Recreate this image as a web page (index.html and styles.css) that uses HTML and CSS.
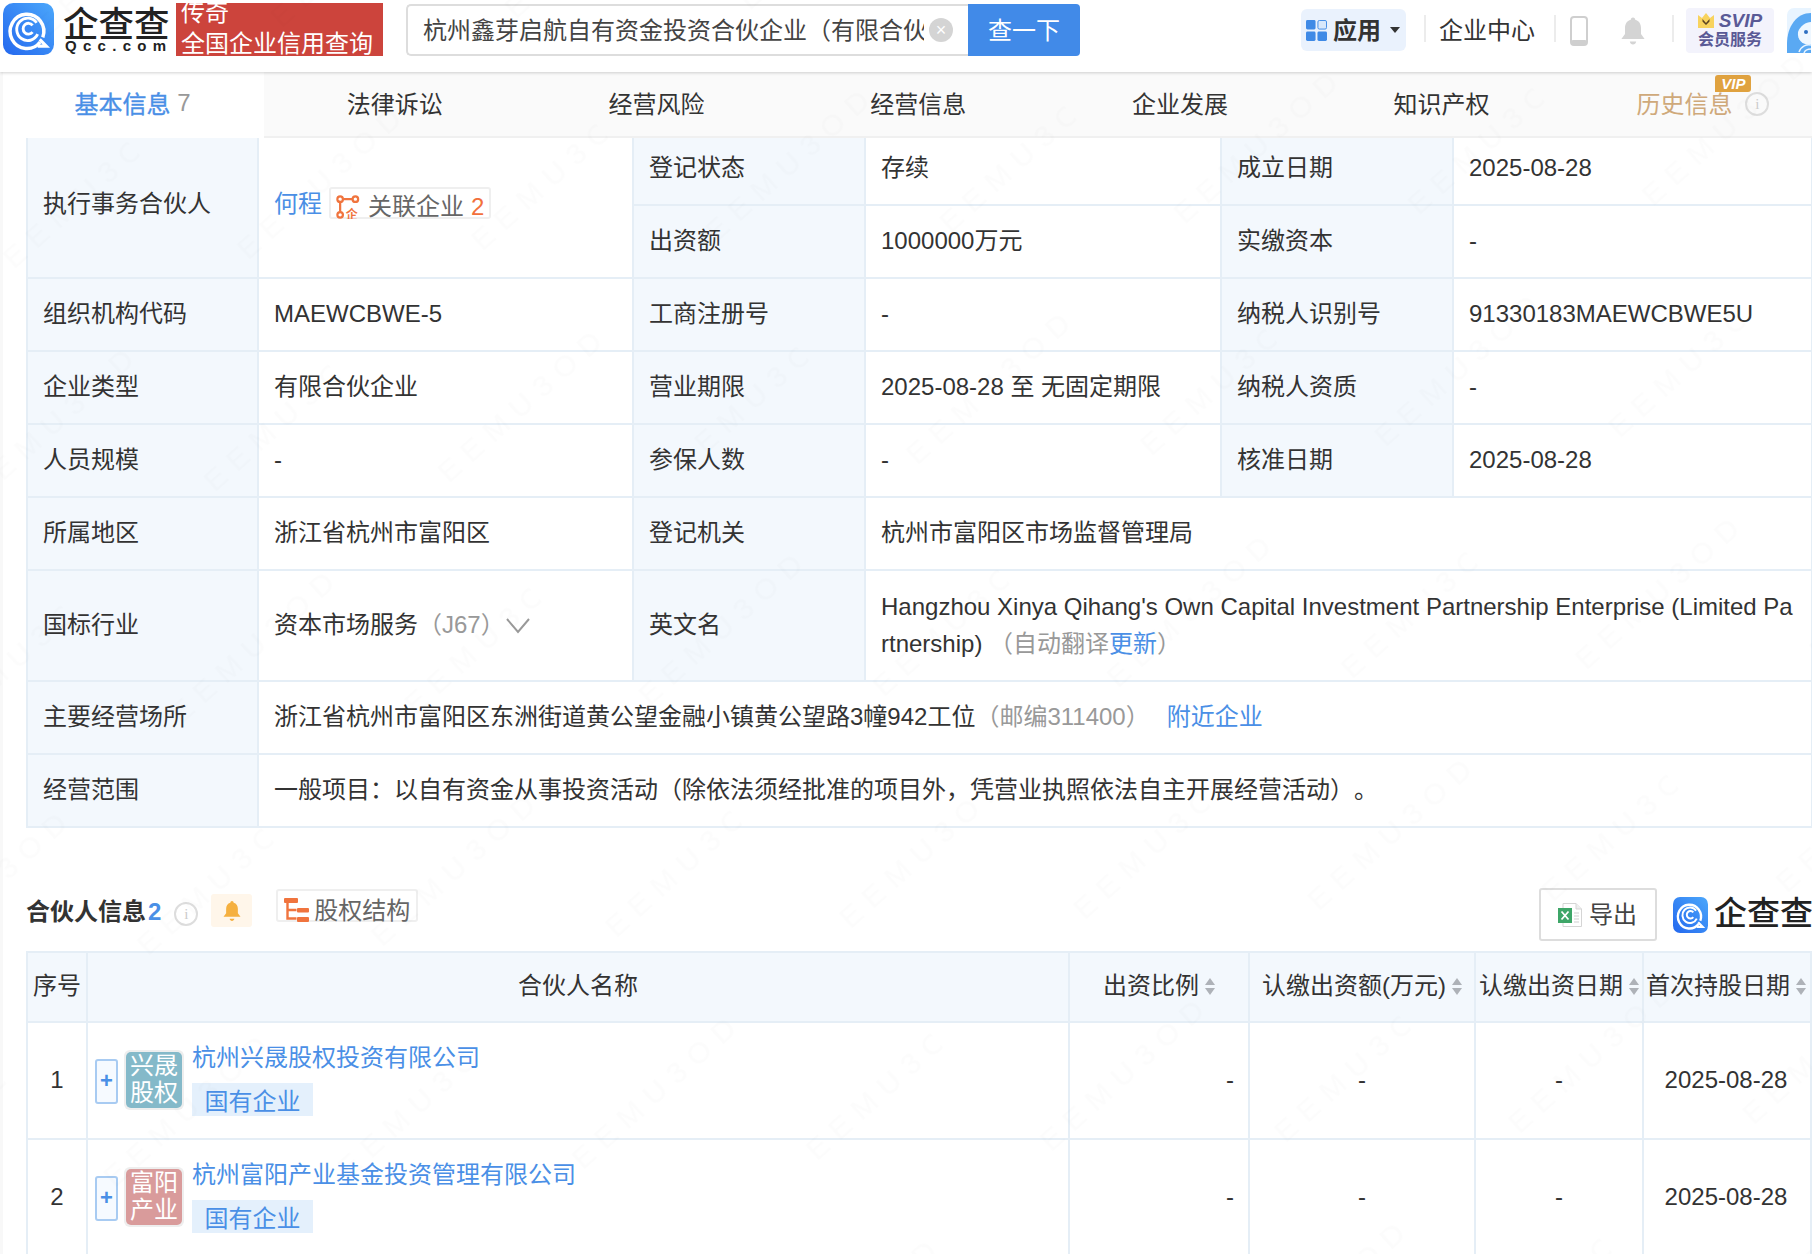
FILE: index.html
```html
<!DOCTYPE html>
<html lang="zh-CN">
<head>
<meta charset="utf-8">
<title>企查查</title>
<link rel="stylesheet" href="styles.css">
</head>
<body>
<div class="page">
  <header class="topbar">
    <svg class="logo-mark" viewBox="0 0 50 50" preserveAspectRatio="none" aria-hidden="true">
      <defs><linearGradient id="lg" x1="0" y1="1" x2="1" y2="0"><stop offset="0" stop-color="#2468ee"/><stop offset="1" stop-color="#4ba7fb"/></linearGradient></defs>
      <rect width="50" height="50" rx="10" fill="url(#lg)"/>
      <path d="M36.5 37.5A16.5 16.5 0 1 1 39 33" fill="none" stroke="#fff" stroke-width="3.4"/>
      <path d="M34 41.5h8.5L36 35" fill="none" stroke="#fff" stroke-width="3"/>
      <path d="M33 19A10.8 10.8 0 1 0 34 30" fill="none" stroke="#fff" stroke-width="2.8"/>
      <path d="M29 21.5A5.2 5.2 0 1 0 29 28" fill="none" stroke="#fff" stroke-width="2.8"/>
    </svg>
    <div class="wordmark">
      <div class="wordmark-cn">企查查</div>
      <div class="wordmark-en">Qcc.com</div>
    </div>
    <div class="promo">
      <div class="promo-top">传奇</div>
      <div class="promo-main">全国企业信用查询</div>
    </div>
    <div class="search">
      <div class="search-box">
        <span class="search-text">杭州鑫芽启航自有资金投资合伙企业（有限合伙企业）</span>
        <span class="search-clear">×</span>
      </div>
      <div class="search-btn"><span class="search-btn-text">查一下</span></div>
    </div>
    <div class="apps">
      <svg class="apps-icon" viewBox="0 0 22 22" aria-hidden="true">
        <rect width="10" height="10" rx="1.5" fill="#3f8ae6"/>
        <rect x="12.5" y=".5" width="9" height="9" rx="1.5" fill="#d8e8fb" stroke="#3f8ae6"/>
        <rect y="12" width="10" height="10" rx="1.5" fill="#3f8ae6"/>
        <rect x="12" y="12" width="10" height="10" rx="1.5" fill="#3f8ae6"/>
      </svg>
      <span class="apps-text">应用</span>
      <span class="apps-caret"></span>
    </div>
    <span class="vsep vsep-a"></span>
    <span class="ent-center">企业中心</span>
    <span class="vsep vsep-b"></span>
    <svg class="phone" viewBox="0 0 18 30" aria-hidden="true">
      <rect x="1" y="1" width="16" height="28" rx="3" fill="#fff" stroke="#cfcfcf" stroke-width="2"/>
      <rect x="1" y="24" width="16" height="5" rx="2" fill="#cfcfcf"/>
    </svg>
    <svg class="bell" viewBox="0 0 24 30" aria-hidden="true">
      <path d="M12 1.500c1.400 0 2.200 1 2.200 2.200 4 1 5.800 4.400 5.800 8.300v6l3.600 5H.4L4 18v-6c0-3.900 1.800-7.300 5.800-8.300C9.800 2.500 10.600 1.500 12 1.500zM8.800 25.500h6.400c-.3 1.800-1.600 3-3.200 3s-2.900-1.200-3.200-3z" fill="#d4d4d4"/>
    </svg>
    <span class="vsep vsep-c"></span>
    <div class="svip">
      <div class="svip-top">
        <svg class="crown" viewBox="0 0 16 15" aria-hidden="true">
          <path d="M0 2l4 3 4-5 4 5 4-3v13H0z" fill="#f8d35e"/>
          <path d="M4.500 6l3.500 4 3.500-4v2.500L8 12 4.500 8.500z" fill="#5b4320"/>
        </svg>
        <span class="svip-label">SVIP</span>
      </div>
      <div class="svip-sub">会员服务</div>
    </div>
    <svg class="avatar" viewBox="0 0 24 45" aria-hidden="true">
      <rect width="40" height="45" rx="7" fill="#e8f4ff"/>
      <path d="M0 36C0 18 10 5 24 5v40H0z" fill="#5aa9f3"/>
      <path d="M11 24c2-6 8-10 13-10v22c-7 2-14-3-13-12z" fill="#eef7ff"/>
      <circle cx="19" cy="24" r="2" fill="#2d6fc2"/>
      <path d="M12 44c2-6 8-8 12-7M17 45c1-3 4-4 7-4" fill="none" stroke="#e8f4ff" stroke-width="1.500"/>
    </svg>
  </header>

  <div class="content">
    <nav class="tabs">
      <div class="tab tab-active">基本信息 <span class="tab-count">7</span></div>
      <div class="tab">法律诉讼</div>
      <div class="tab">经营风险</div>
      <div class="tab">经营信息</div>
      <div class="tab">企业发展</div>
      <div class="tab">知识产权</div>
      <div class="tab tab-history">
        <span class="history-label">历史信息<span class="vip-badge">VIP</span></span>
        <span class="info-dot info-dot-tab">i</span>
      </div>
    </nav>

    <main class="main">
      <table class="info">
        <colgroup><col class="i1"><col class="i2"><col class="i3"><col class="i4"><col class="i5"><col class="i6"></colgroup>
        <tbody>
          <tr>
            <th rowspan="2">执行事务合伙人</th>
            <td rowspan="2">
              <div class="person">
                <a class="link person-name">何程</a>
                <span class="related">
                  <svg class="related-icon" viewBox="0 0 26 26" aria-hidden="true">
                    <circle cx="4.500" cy="4.500" r="3" fill="none" stroke="#f0743e" stroke-width="2.400"/>
                    <circle cx="21" cy="4.500" r="3" fill="none" stroke="#f0743e" stroke-width="2.400"/>
                    <circle cx="4.500" cy="21.500" r="3" fill="none" stroke="#f0743e" stroke-width="2.400"/>
                    <path d="M8 4.500h9.500M4.500 8v10" stroke="#f0743e" stroke-width="2.400"/>
                    <text x="17" y="25.500" class="related-ent">企</text>
                  </svg>
                  <span class="related-text">关联企业</span>
                  <span class="related-num">2</span>
                </span>
              </div>
            </td>
            <th>登记状态</th><td>存续</td>
            <th>成立日期</th><td>2025-08-28</td>
          </tr>
          <tr>
            <th>出资额</th><td>1000000万元</td>
            <th>实缴资本</th><td>-</td>
          </tr>
          <tr>
            <th>组织机构代码</th><td>MAEWCBWE-5</td>
            <th>工商注册号</th><td>-</td>
            <th>纳税人识别号</th><td>91330183MAEWCBWE5U</td>
          </tr>
          <tr>
            <th>企业类型</th><td>有限合伙企业</td>
            <th>营业期限</th><td>2025-08-28 至 无固定期限</td>
            <th>纳税人资质</th><td>-</td>
          </tr>
          <tr>
            <th>人员规模</th><td>-</td>
            <th>参保人数</th><td>-</td>
            <th>核准日期</th><td>2025-08-28</td>
          </tr>
          <tr>
            <th>所属地区</th><td>浙江省杭州市富阳区</td>
            <th>登记机关</th><td colspan="3">杭州市富阳区市场监督管理局</td>
          </tr>
          <tr class="tall">
            <th>国标行业</th>
            <td>
              <div class="industry">资本市场服务<span class="muted">（J67）</span>
                <svg class="chevron" viewBox="0 0 24 16" aria-hidden="true"><path d="M1 1l11 13L23 1" fill="none" stroke="#999" stroke-width="2"/></svg>
              </div>
            </td>
            <th>英文名</th>
            <td colspan="3" class="en-name">Hangzhou Xinya Qihang's Own Capital Investment Partnership Enterprise (Limited Partnership) <span class="muted">（自动翻译</span><a class="link">更新</a><span class="muted">）</span></td>
          </tr>
          <tr>
            <th>主要经营场所</th>
            <td colspan="5">浙江省杭州市富阳区东洲街道黄公望金融小镇黄公望路3幢942工位<span class="muted">（邮编311400）</span><a class="link nearby">附近企业</a></td>
          </tr>
          <tr>
            <th>经营范围</th>
            <td colspan="5">一般项目：以自有资金从事投资活动（除依法须经批准的项目外，凭营业执照依法自主开展经营活动）。</td>
          </tr>
        </tbody>
      </table>

      <section class="partners">
        <div class="section-head">
          <span class="section-title">合伙人信息</span>
          <span class="section-count">2</span>
          <span class="info-dot info-dot-title">i</span>
          <span class="bell-box">
            <svg class="bell-small" viewBox="0 0 24 30" aria-hidden="true">
              <path d="M12 1.500c1.400 0 2.200 1 2.200 2.200 4 1 5.800 4.400 5.800 8.300v6l3.600 5H.4L4 18v-6c0-3.900 1.800-7.300 5.800-8.300C9.800 2.500 10.600 1.500 12 1.500zM8.800 25.500h6.400c-.3 1.800-1.600 3-3.200 3s-2.900-1.200-3.200-3z" fill="#f5b040"/>
            </svg>
          </span>
          <span class="equity">
            <svg class="equity-icon" viewBox="0 0 26 24" aria-hidden="true">
              <rect x="0" y="0" width="14" height="5" rx="1" fill="#f0743e"/>
              <rect x="13" y="10" width="12" height="4.500" rx="1" fill="#f0743e"/>
              <rect x="13" y="19" width="12" height="5" rx="1" fill="#f0743e"/>
              <path d="M3.500 5v15.500h9M3.500 12h9" fill="none" stroke="#f0743e" stroke-width="2.400"/>
            </svg>
            股权结构
          </span>
          <span class="section-right">
            <span class="export">
              <svg class="xls" viewBox="0 0 24 24" aria-hidden="true">
                <path d="M5 .5h13l5.500 5.500v17.500H5z" fill="#fff" stroke="#d5d5d5"/>
                <path d="M18 .5V6h5.500" fill="#eee" stroke="#d5d5d5"/>
                <path d="M16 10h5M16 13h5M16 16h5M16 19h5" stroke="#cfcfcf" stroke-width="1.200"/>
                <rect x="0" y="5" width="14" height="15" fill="#3ea668"/>
                <path d="M3.500 8.500l7 8M10.500 8.500l-7 8" stroke="#fff" stroke-width="1.800"/>
              </svg>
              导出
            </span>
            <svg class="logo-small" viewBox="0 0 50 50" preserveAspectRatio="none" aria-hidden="true">
              <rect width="50" height="50" rx="10" fill="url(#lg)"/>
              <path d="M36.500 37.500A16.500 16.500 0 1 1 39 33" fill="none" stroke="#fff" stroke-width="3.400"/>
              <path d="M34 41.500h8.500L36 35" fill="none" stroke="#fff" stroke-width="3"/>
              <path d="M33 19A10.800 10.800 0 1 0 34 30" fill="none" stroke="#fff" stroke-width="2.800"/>
              <path d="M29 21.500A5.200 5.200 0 1 0 29 28" fill="none" stroke="#fff" stroke-width="2.800"/>
            </svg>
            <span class="logo-small-text">企查查</span>
          </span>
        </div>

        <table class="ptable">
          <colgroup><col class="p1"><col class="p2"><col class="p3"><col class="p4"><col class="p5"><col class="p6"></colgroup>
          <thead>
            <tr>
              <th class="seq-head">序号</th>
              <th>合伙人名称</th>
              <th><span class="th-in">出资比例<span class="sort"></span></span></th>
              <th><span class="th-in">认缴出资额(万元)<span class="sort"></span></span></th>
              <th><span class="th-in">认缴出资日期<span class="sort"></span></span></th>
              <th><span class="th-in">首次持股日期<span class="sort"></span></span></th>
            </tr>
          </thead>
          <tbody>
            <tr>
              <td class="center">1</td>
              <td>
                <div class="partner">
                  <span class="plus">+</span>
                  <span class="mark"><span class="mark-in mark-teal">兴晟<br>股权</span></span>
                  <div class="partner-info">
                    <a class="link partner-name">杭州兴晟股权投资有限公司</a>
                    <span class="tag">国有企业</span>
                  </div>
                </div>
              </td>
              <td class="right">-</td>
              <td class="center">-</td>
              <td class="center">-</td>
              <td class="center">2025-08-28</td>
            </tr>
            <tr>
              <td class="center">2</td>
              <td>
                <div class="partner">
                  <span class="plus">+</span>
                  <span class="mark"><span class="mark-in mark-red">富阳<br>产业</span></span>
                  <div class="partner-info">
                    <a class="link partner-name">杭州富阳产业基金投资管理有限公司</a>
                    <span class="tag">国有企业</span>
                  </div>
                </div>
              </td>
              <td class="right">-</td>
              <td class="center">-</td>
              <td class="center">-</td>
              <td class="center">2025-08-28</td>
            </tr>
          </tbody>
        </table>
      </section>
    </main>
  </div>

  <svg class="watermark" width="1812" height="1254" aria-hidden="true">
    <defs>
      <pattern id="wm" width="360" height="300" patternUnits="userSpaceOnUse" patternTransform="rotate(-42)">
        <text x="10" y="60" class="wm-text">EEMU3OD</text>
        <text x="190" y="210" class="wm-text">EEMU3OD</text>
      </pattern>
    </defs>
    <rect width="1812" height="1254" fill="url(#wm)"/>
  </svg>
</div>
</body>
</html>
```

FILE: styles.css
```css
* { box-sizing: border-box; }
html, body { margin: 0; padding: 0; background: #fff; }
body {
  font-family: "Liberation Sans", "Noto Sans CJK SC", sans-serif;
  font-size: 24px;
  color: #333;
  text-spacing-trim: space-all;
}
.page { position: relative; width: 1812px; height: 1254px; overflow: hidden; background: #fff; }

/* top bar */
.topbar {
  position: relative;
  z-index: 2;
  display: flex;
  align-items: center;
  height: 72px;
  padding: 0 0 16px 3px;
  background: #fff;
  box-shadow: 0 1px 3px rgba(0, 0, 0, .18);
}
.logo-mark { width: 51px; height: 52px; margin-top: 2px; flex: none; }
.wordmark { width: 113px; margin-left: 9px; margin-top: 6px; flex: none; }
.wordmark-cn { font-size: 35.5px; line-height: 30px; font-weight: 500; color: #222; white-space: nowrap; }
.wordmark-en { margin-top: -2px; padding-left: 2px; font-size: 15px; line-height: 15px; font-weight: 700; color: #222; letter-spacing: 6.3px; white-space: nowrap; }
.promo {
  width: 207px; height: 53px; margin-left: 0; margin-top: 2px; flex: none; overflow: hidden;
  background: #cc443c; color: #fff; padding-left: 5px;
}
.promo-top { line-height: 30px; margin-top: -5px; }
.promo-main { line-height: 30px; margin-top: 1px; }
.search { display: flex; width: 674px; height: 52px; margin-left: 23px; margin-top: 4px; flex: none; }
.search-box {
  display: flex; align-items: center; width: 562px; height: 52px; padding-left: 15px;
  border: 2px solid #ddd; border-right: 0; border-radius: 5px 0 0 5px;
}
.search-text { width: 501px; margin-bottom: 4px; overflow: hidden; white-space: nowrap; color: #444; }
.search-clear {
  display: flex; align-items: center; justify-content: center; width: 24px; height: 24px; margin-left: 5px;
  border-radius: 50%; background: #d4d4d4; color: #fff; font-size: 18px; line-height: 24px; flex: none;
}
.search-btn {
  display: flex; align-items: center; justify-content: center; width: 112px; height: 52px;
  background: #418ae8; color: #fff; border-radius: 0 4px 4px 0;
}
.search-btn-text { margin-bottom: 4px; }
.apps {
  display: flex; align-items: center; width: 105px; height: 42px; margin-left: 221px; margin-top: 4px; padding-left: 5px;
  background: #eaf2fd; border-radius: 6px; flex: none;
}
.apps-icon { width: 21px; height: 21px; flex: none; }
.apps-text { margin-left: 6px; margin-bottom: 4px; font-weight: 700; color: #333; }
.apps-caret { margin-left: 9px; border: 5.5px solid transparent; border-top: 6px solid #333; border-bottom: 0; }
.vsep { width: 2px; height: 27px; background: #ececec; margin-top: 1px; flex: none; }
.vsep-a { margin-left: 18px; }
.ent-center { margin-left: 13px; color: #333; white-space: nowrap; }
.vsep-b { margin-left: 19px; }
.phone { width: 18px; height: 30px; margin-left: 14px; margin-top: 6px; flex: none; }
.bell { width: 24px; height: 30px; margin-left: 33px; margin-top: 6px; flex: none; }
.vsep-c { margin-left: 27px; }
.svip {
  width: 88px; height: 45px; margin-left: 12px; margin-top: 5px; padding-top: 3px;
  background: #f3f3fc; border-radius: 4px; flex: none; text-align: center; color: #5a5a96;
}
.svip-top { display: flex; align-items: center; justify-content: center; height: 19px; }
.crown { width: 16px; height: 15px; flex: none; }
.svip-label { margin-left: 5px; font-size: 19px; line-height: 18px; font-weight: 700; font-style: italic; }
.svip-sub { font-size: 16px; line-height: 20px; font-weight: 700; margin-top: 0; }
.avatar { width: 24px; height: 45px; margin-left: 13px; margin-top: 5px; flex: none; }

/* tabs */
.content { height: 1182px; border-left: 3px solid #f8f8f8; }
.tabs {
  display: flex; height: 66px; background: #fafafa; border-bottom: 2px solid #f0f0f0; width: 1830px;
}
.tab {
  display: flex; align-items: center; justify-content: center; width: 261.7px; height: 64px;
  padding-bottom: 6px; padding-top: 2px; white-space: pre; color: #333; flex: none;
}
.tab-active { width: 261px; height: 66px; padding-right: 2px; padding-bottom: 8px; background: #fff; color: #4a8fe6; -webkit-text-stroke: .35px #4a8fe6; }
.tab-count { color: #999; font-weight: 400; -webkit-text-stroke: 0; position: relative; top: 1px; }
.tab-history { justify-content: flex-start; padding-left: 64px; color: #cfa97a; }
.history-label { position: relative; }
.vip-badge {
  position: absolute; top: -10px; right: -19px; width: 36px; height: 17px;
  background: #e0a23f; color: #fff; border-radius: 3px 3px 3px 0;
  font-size: 15px; line-height: 17px; font-weight: 700; font-style: italic; text-align: center;
}
.info-dot {
  display: inline-flex; align-items: center; justify-content: center; width: 24px; height: 24px; margin-left: 13px;
  border: 2px solid #ddd; border-radius: 50%; color: #ccc; font-size: 15px; line-height: 20px; font-family: "Liberation Serif", serif; flex: none;
}
.info-dot-tab { margin-top: 4px; }

/* info table */
.main { height: 1116px; padding-left: 23px; overflow: hidden; }
table { border-collapse: collapse; table-layout: fixed; }
.info { width: 1785px; margin-top: -7px; }
.i1 { width: 231px; } .i2 { width: 375px; } .i3 { width: 232px; }
.i4 { width: 356px; } .i5 { width: 232px; } .i6 { width: 359px; }
.info tr { height: 73px; }
.info tr.tall { height: 111px; }
.info th, .info td {
  border: 2px solid #e5eef6; padding: 0 15px 2px; font-weight: 400; line-height: 30px; text-align: left; color: #333; vertical-align: middle;
}
.info th { background: #f3f8fd; }
.info td { background: #fff; }
.info td.en-name { padding-bottom: 2px; line-height: 37px; word-break: break-all; }
.link { color: #4a8fe6; text-decoration: none; }
.muted { color: #999; }
.person { display: flex; align-items: flex-start; padding-bottom: 4px; }
.person-name { margin-top: 3px; }
.related {
  display: inline-flex; align-items: center; height: 32px; margin-left: 7px; margin-top: 1px; padding: 8px 5px 0 5px;
  border: 2px solid #efefef; border-radius: 3px;
}
.related-icon { width: 24px; height: 24px; flex: none; }
.related-ent { font-size: 13px; font-weight: 700; fill: #f0743e; text-anchor: middle; }
.related-text { margin-left: 8px; color: #666; }
.related-num { margin-left: 7px; color: #f2703c; }
.industry { display: flex; align-items: center; }
.chevron { width: 26px; height: 16px; margin-left: 0; margin-top: 2px; flex: none; }
.nearby { margin-left: 17px; }

/* partners */
.section-head { display: flex; align-items: flex-start; height: 53px; margin-top: 60px; margin-bottom: 10px; }
.section-title { margin-top: 6px; font-weight: 700; color: #333; white-space: nowrap; line-height: 36px; }
.section-count { margin-top: 6px; margin-left: 2px; font-weight: 700; color: #4a8fe6; line-height: 36px; }
.info-dot-title { margin-left: 13px; margin-top: 14px; }
.bell-box {
  display: flex; align-items: center; justify-content: center; width: 41px; height: 33px; margin-left: 13px; margin-top: 6px;
  background: #fff6ea; border-radius: 3px;
}
.bell-small { width: 18px; height: 22px; }
.equity {
  display: inline-flex; align-items: center; width: 142px; height: 33px; margin-left: 24px; margin-top: 1px; padding: 11px 0 0 6px;
  border: 2px solid #efefef; border-radius: 3px; color: #666; line-height: 30px; white-space: nowrap; flex: none;
}
.equity-icon { width: 26px; height: 24px; margin-right: 4px; margin-bottom: 2px; flex: none; }
.section-right { display: flex; align-items: center; margin-left: auto; height: 53px; width: 273px; flex: none; }
.export {
  display: inline-flex; align-items: center; width: 118px; height: 53px; padding: 0 0 4px 17px;
  border: 2px solid #ddd; border-radius: 3px; color: #444; flex: none;
}
.xls { width: 24px; height: 24px; margin-right: 7px; margin-top: 4px; flex: none; }
.logo-small { width: 35px; height: 36px; margin-left: 16px; flex: none; }
.logo-small-text { margin-left: 6px; margin-bottom: 7px; font-size: 33px; font-weight: 500; color: #222; white-space: nowrap; }

.ptable { width: 1784px; }
.p1 { width: 60px; } .p2 { width: 982px; } .p3 { width: 180px; }
.p4 { width: 226px; } .p5 { width: 168px; } .p6 { width: 168px; }
.ptable th, .ptable td { border: 2px solid #e5eef6; padding: 0; font-weight: 400; line-height: 30px; color: #333; vertical-align: middle; }
.ptable th { height: 70px; padding-bottom: 2px; background: #f3f8fd; text-align: center; white-space: nowrap; }
.ptable td { height: 117px; padding-bottom: 1px; background: #fff; }
.ptable th.seq-head { text-align: left; padding-left: 5px; }
.ptable th:last-child, .ptable td:last-child { padding-right: 2px; }
.th-in { display: inline-flex; align-items: center; }
.sort { position: relative; display: inline-block; width: 10px; height: 17px; margin-left: 6px; flex: none; }
.sort::before, .sort::after {
  content: ""; position: absolute; left: 0; border-left: 5px solid transparent; border-right: 5px solid transparent;
}
.sort::before { top: 0; border-bottom: 7px solid #aeb2b8; }
.sort::after { bottom: 0; border-top: 7px solid #aeb2b8; }
.center { text-align: center; }
.ptable td.right { text-align: right; padding-right: 14px; }
.partner { display: flex; align-items: center; padding-left: 7px; }
.plus {
  display: flex; align-items: center; justify-content: center; width: 23px; height: 45px; margin-top: 2px;
  background: #f6faff; border: 2px solid #a8cbf2; border-radius: 3px; color: #4a8fe6; font-size: 22px; font-weight: 700; line-height: 1; flex: none;
}
.mark { width: 60px; height: 60px; margin-left: 6px; padding: 2px; background: #eee; border-radius: 6px; flex: none; }
.mark-in {
  display: block; width: 56px; height: 56px; border-radius: 5px; color: #fff; font-size: 24px; line-height: 27px; text-align: center; overflow: hidden; white-space: nowrap;
}
.mark-teal { background: #84b9c9; }
.mark-red { background: #d99b9b; }
.partner-info { display: flex; flex-direction: column; align-items: flex-start; margin-left: 8px; margin-bottom: 4px; }
.partner-name { line-height: 36px; white-space: nowrap; }
.tag {
  display: block; height: 33px; margin-top: 7px; padding: 0 12.5px; background: #e4f0fc; color: #4a8fe6; line-height: 37px; overflow: hidden;
}

/* watermark */
.watermark { position: absolute; left: 0; top: 0; z-index: 5; pointer-events: none; }
.wm-text { font-family: "Liberation Sans", sans-serif; font-size: 30px; letter-spacing: 10px; fill: rgba(0, 0, 0, .012); }
```
